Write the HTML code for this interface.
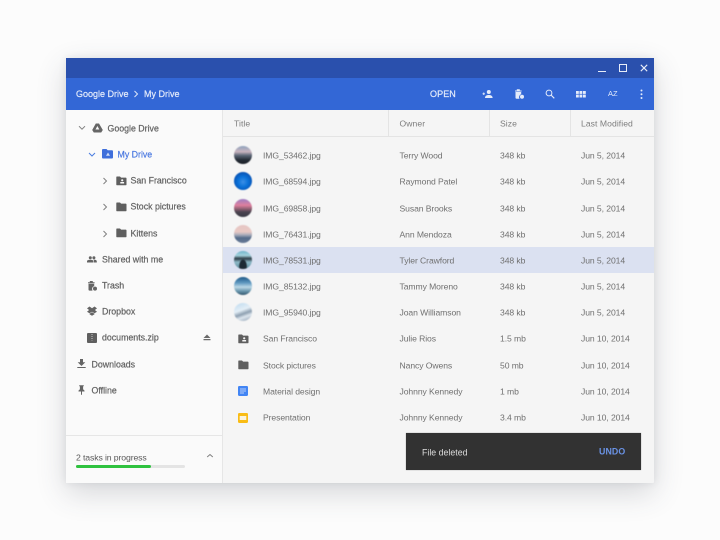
<!DOCTYPE html>
<html><head><meta charset="utf-8"><style>
html,body{margin:0;padding:0;width:720px;height:540px;overflow:hidden;background:#fcfcfc;font-family:"Liberation Sans",sans-serif}
#win{position:absolute;left:66px;top:58px;width:588px;height:425px;background:#f5f5f5;box-shadow:0 10px 30px rgba(60,64,80,.2),0 0 8px rgba(60,64,80,.1);border-radius:1px;overflow:hidden}
.abs,.t,.w,svg{position:absolute}
.t{white-space:nowrap;font-size:8.6px;line-height:12px;color:#707070;transform:translateY(-6.5px);letter-spacing:-.08px;filter:blur(.3px)}
.h{letter-spacing:.06px;color:#7d7d7d}
.s{font-size:8.8px;letter-spacing:0;color:#5f5f5f;-webkit-text-stroke:.2px #5f5f5f}
.w{white-space:nowrap;font-size:9px;line-height:12px;color:#e4ebfa;transform:translateY(-6px);-webkit-text-stroke:.2px #e4ebfa;filter:blur(.25px)}
.av{position:absolute;left:234px;width:18px;height:18px;border-radius:50%;margin-top:-9px;filter:blur(.4px)}
</style></head><body>
<div id="win"></div>
<div class="abs" style="left:66px;top:58px;width:588px;height:20px;background:#2a50ad"></div>
<div class="abs" style="left:66px;top:78px;width:588px;height:32px;background:#3367d6"></div>
<div class="abs" style="left:66px;top:110px;width:156px;height:373px;background:#fafafa"></div>
<div class="abs" style="left:222px;top:110px;width:1px;height:373px;background:#e6e6e6"></div>
<div class="abs" style="left:66px;top:435px;width:156px;height:1px;background:#e6e6e6"></div>
<div class="abs" style="left:223px;top:136px;width:431px;height:1px;background:#e4e4e4"></div>
<div class="abs" style="left:388px;top:110px;width:1px;height:26px;background:#e4e4e4"></div>
<div class="abs" style="left:489px;top:110px;width:1px;height:26px;background:#e4e4e4"></div>
<div class="abs" style="left:570px;top:110px;width:1px;height:26px;background:#e4e4e4"></div>
<div class="abs" style="left:223px;top:247px;width:431px;height:26px;background:#dbe1f1"></div>

<!-- window controls -->
<div class="abs" style="left:598px;top:71px;width:8px;height:1px;background:#e8edf8"></div>
<div class="abs" style="left:619px;top:64px;width:6px;height:6px;border:1.2px solid #e8edf8"></div>
<svg style="left:640px;top:64px" width="8" height="8"><path d="M.8 .8L7.200 7.200M7.200 .8L.8 7.200" stroke="#e8edf8" stroke-width="1.100"/></svg>

<div class="w" style="left:76px;top:94px">Google Drive</div>
<svg style="left:133px;top:90px" width="6" height="8"><path d="M1.500 1L4.500 4L1.500 7" fill="none" stroke="#dfe7f8" stroke-width="1"/></svg>
<div class="w" style="left:144px;top:94px">My Drive</div>
<div class="w" style="left:430px;top:94px;letter-spacing:.1px">OPEN</div>

<!-- toolbar icons -->
<svg style="left:482px;top:89px" width="11" height="10" fill="#e4ebfa"><circle cx="6.800" cy="3" r="2"/><path d="M3 9C3 6.500 5 6 6.800 6S10.600 6.500 10.600 9Z"/><path d="M.500 4.800H3M1.750 3.500V6" stroke="#e4ebfa" stroke-width=".9"/></svg>
<svg style="left:514px;top:88px" width="11" height="12" fill="#e4ebfa"><path d="M1 2.500H7.600V3.500H1ZM2.800 1.200H5.800V2.500H2.800ZM1.500 4H7.200V6.300A3 3 0 0 0 5.500 10.800H2.500Q1.500 10.800 1.500 9.800Z"/><circle cx="8" cy="8.800" r="2"/></svg>
<svg style="left:545px;top:89px" width="10" height="10"><circle cx="4" cy="4" r="2.900" fill="none" stroke="#e4ebfa" stroke-width="1"/><path d="M6 6L9.300 9.300" stroke="#e4ebfa" stroke-width="1.100"/></svg>
<svg style="left:576px;top:91px" width="10" height="7" fill="#e4ebfa"><rect x="0" y="0" width="2.800" height="2.900"/><rect x="3.500" y="0" width="2.800" height="2.900"/><rect x="7" y="0" width="2.800" height="2.900"/><rect x="0" y="3.600" width="2.800" height="2.900"/><rect x="3.500" y="3.600" width="2.800" height="2.900"/><rect x="7" y="3.600" width="2.800" height="2.900"/></svg>
<div class="w" style="left:608px;top:94px;font-size:7.500px;-webkit-text-stroke:0">AZ</div>
<svg style="left:640px;top:89px" width="3" height="11" fill="#e4ebfa"><circle cx="1.500" cy="1.500" r="1"/><circle cx="1.500" cy="5.300" r="1"/><circle cx="1.500" cy="9" r="1"/></svg>

<!-- sidebar -->
<svg style="left:78px;top:125px" width="8" height="6"><path d="M1 1.200L4 4.200L7 1.200" fill="none" stroke="#808080" stroke-width="1"/></svg>
<svg style="left:92px;top:123px" width="11" height="10" fill="#666"><path fill-rule="evenodd" d="M3.800 .500H7L10.800 7L9.200 9.500H1.800L.200 7ZM5.400 3L3.500 6.500H7.300Z"/></svg>
<div class="t s" style="left:107.500px;top:129px">Google Drive</div>

<svg style="left:88px;top:152px" width="8" height="6"><path d="M1 1L4 4L7 1" fill="none" stroke="#4a7de0" stroke-width="1"/></svg>
<svg style="left:102px;top:149px" width="12" height="10"><path d="M1 0H4.500L5.700 1.300H10Q11 1.300 11 2.300V8.500Q11 9.500 10 9.500H1Q0 9.500 0 8.500V1Q0 0 1 0Z" fill="#3f6fdb"/><path d="M6 3.500L8 6.800H4Z" fill="#cfdcf7"/></svg>
<div class="t s" style="left:117.500px;top:155px;color:#4a78e0;-webkit-text-stroke:.2px #4a78e0">My Drive</div>

<svg style="left:102px;top:177px" width="6" height="8"><path d="M1.500 1L4.500 4L1.500 7" fill="none" stroke="#808080" stroke-width="1"/></svg>
<svg style="left:115.500px;top:176px" width="11" height="10"><path d="M1 .500H4L5.100 1.600H9.800Q10.500 1.600 10.500 2.400V8.600Q10.500 9.300 9.800 9.300H1Q.300 9.300 .300 8.600V1.200Q.300 .500 1 .500Z" fill="#5f5f5f"/><circle cx="6.200" cy="4.300" r="1.100" fill="#fafafa"/><rect x="4.300" y="6" width="3.800" height="1.500" fill="#fafafa"/></svg>
<div class="t s" style="left:130.500px;top:181px">San Francisco</div>

<svg style="left:102px;top:203px" width="6" height="8"><path d="M1.500 1L4.500 4L1.500 7" fill="none" stroke="#808080" stroke-width="1"/></svg>
<svg style="left:115.500px;top:202px" width="11" height="10"><path d="M1 .500H4L5.100 1.600H9.800Q10.500 1.600 10.500 2.400V8.600Q10.500 9.300 9.800 9.300H1Q.300 9.300 .300 8.600V1.200Q.300 .500 1 .500Z" fill="#5f5f5f"/></svg>
<div class="t s" style="left:130.500px;top:207px">Stock pictures</div>

<svg style="left:102px;top:230px" width="6" height="8"><path d="M1.500 1L4.500 4L1.500 7" fill="none" stroke="#808080" stroke-width="1"/></svg>
<svg style="left:115.500px;top:228px" width="11" height="10"><path d="M1 .500H4L5.100 1.600H9.800Q10.500 1.600 10.500 2.400V8.600Q10.500 9.300 9.800 9.300H1Q.300 9.300 .300 8.600V1.200Q.300 .500 1 .500Z" fill="#5f5f5f"/></svg>
<div class="t s" style="left:130.500px;top:234px">Kittens</div>

<svg style="left:87px;top:256px" width="10" height="7" fill="#646464"><circle cx="3.300" cy="1.700" r="1.500"/><circle cx="6.900" cy="1.700" r="1.500"/><path d="M0 6.500V5.300C0 4 2 3.700 3.300 3.700S6.500 4 6.500 5.300V6.500ZM7 6.500V5C7 4.500 6.800 4.100 6.300 3.700C8 3.500 9.800 4.100 9.800 5.300V6.500Z"/></svg>
<div class="t s" style="left:102px;top:260px">Shared with me</div>

<svg style="left:87px;top:280px" width="11" height="12" fill="#646464"><path d="M1 2.300H7.600V3.300H1ZM2.800 1H5.800V2.300H2.800ZM1.500 3.800H7.200V6.100A3 3 0 0 0 5.500 10.600H2.500Q1.500 10.600 1.500 9.600Z"/><circle cx="8" cy="8.600" r="2"/></svg>
<div class="t s" style="left:102px;top:286px">Trash</div>

<svg style="left:87px;top:306px" width="10" height="10" fill="#646464"><path d="M2.500 .500L5 2.200L7.500 .500L10 2.400L7.900 4L10 5.700L7.500 7.300L5 5.700L2.500 7.300L0 5.700L2.100 4L0 2.400ZM2.500 7.800L5 6.300L7.500 7.800L7.500 8.300L5 9.800L2.500 8.300Z"/></svg>
<div class="t s" style="left:102px;top:312px">Dropbox</div>

<svg style="left:87px;top:332.500px" width="10" height="10"><rect width="10" height="10" rx="1" fill="#5f5f5f"/><path d="M5 1V7.500" stroke="#c8c8c8" stroke-width="1" stroke-dasharray="1 1"/></svg>
<div class="t s" style="left:102px;top:338px">documents.zip</div>
<svg style="left:203px;top:334px" width="8" height="7" fill="#6a6a6a"><path d="M4 .500L7.500 4H.500ZM.500 5H7.500V6.200H.500Z"/></svg>

<svg style="left:77px;top:359px" width="9" height="10" fill="#646464"><path d="M3 0H6V3.300H8.300L4.500 7L.700 3.300H3ZM.300 8H8.700V9H.300Z"/></svg>
<div class="t s" style="left:91.500px;top:364.500px">Downloads</div>
<svg style="left:78px;top:385px" width="7" height="10" fill="#646464"><path d="M1.200 .300H5.800V1.300H5.100V4.300L6.500 5.600V6.500H4V9.800H3V6.500H.500V5.600L1.900 4.300V1.300H1.200Z"/></svg>
<div class="t s" style="left:91.500px;top:390.500px">Offline</div>

<!-- progress -->
<div class="t" style="left:76px;top:457.500px;color:#5a5a5a;font-size:8.700px;letter-spacing:-.12px">2 tasks in progress</div>
<div class="abs" style="left:76px;top:465px;width:109px;height:3px;border-radius:1.500px;background:#e4e4e4"></div>
<div class="abs" style="left:76px;top:465px;width:75px;height:3px;border-radius:1.500px;background:#2fc23f"></div>
<svg style="left:206px;top:453px" width="8" height="6"><path d="M1.200 4L4 1.500L6.800 4" fill="none" stroke="#808080" stroke-width="1"/></svg>

<!-- header -->
<div class="t h" style="left:234px;top:123.500px">Title</div>
<div class="t h" style="left:399.500px;top:123.500px">Owner</div>
<div class="t h" style="left:500px;top:123.500px">Size</div>
<div class="t h" style="left:581px;top:123.500px">Last Modified</div>

<!-- avatars -->
<div class="av" style="top:155px;background:linear-gradient(180deg,#8fa3bd 0,#c9b4bf 32%,#5d6878 52%,#232a34 78%,#1a1f28 100%)"></div>
<div class="av" style="top:181px;background:radial-gradient(circle at 50% 55%,#3c8fe6 0,#0a72d9 38%,#063a98 100%)"></div>
<div class="av" style="top:208px;background:linear-gradient(180deg,#9d7fc4 0,#df7f9e 35%,#a4687e 50%,#4b4450 72%,#393a44 100%)"></div>
<div class="av" style="top:234px;background:linear-gradient(180deg,#e6c6c4 0,#e9c9c4 38%,#a8acbb 55%,#536a89 72%,#6b7d98 100%)"></div>
<div class="av" style="top:260px;background:radial-gradient(ellipse 4px 7px at 50% 85%,#1d2a33 0,#1d2a33 90%,transparent 100%),linear-gradient(180deg,#6fb3c9 0,#a5d3dd 25%,#2c3b44 42%,#8db9c7 62%,#5d8a9a 100%)"></div>
<div class="av" style="top:286px;background:linear-gradient(180deg,#1f5a88 0,#5d97bf 32%,#bcd8e6 56%,#6a97ae 78%,#33566d 100%)"></div>
<div class="av" style="top:312px;background:linear-gradient(160deg,#bcd9ee 0,#e4eff7 40%,#8d9fb0 58%,#dde6ee 72%,#8a9cae 100%)"></div>

<!-- item icons -->
<svg style="left:237.500px;top:333.500px" width="11" height="10"><path d="M1 .500H4L5.100 1.600H9.800Q10.500 1.600 10.500 2.400V8.600Q10.500 9.300 9.800 9.300H1Q.300 9.300 .300 8.600V1.200Q.300 .500 1 .500Z" fill="#5f5f5f"/><circle cx="6.200" cy="4.300" r="1.100" fill="#f5f5f5"/><rect x="4.300" y="6" width="3.800" height="1.500" fill="#f5f5f5"/></svg>
<svg style="left:237.500px;top:360px" width="11" height="10"><path d="M1 .500H4L5.100 1.600H9.800Q10.500 1.600 10.500 2.400V8.600Q10.500 9.300 9.800 9.300H1Q.300 9.300 .300 8.600V1.200Q.300 .500 1 .500Z" fill="#5f5f5f"/></svg>
<svg style="left:238px;top:385.500px" width="10" height="10"><rect width="10" height="10" rx="1.200" fill="#4285f4"/><path d="M2 3H8M2 5H8M2 7H6" stroke="#dfe9fb" stroke-width=".8"/></svg>
<svg style="left:238px;top:412.500px" width="10" height="10"><rect width="10" height="10" rx="1.200" fill="#f9bc15"/><rect x="1.700" y="3" width="6.600" height="4" fill="#fbf3dc"/></svg>

<!-- rows -->
<div class="t" style="left:263px;top:155.500px">IMG_53462.jpg</div><div class="t" style="left:399.500px;top:155.500px">Terry Wood</div><div class="t" style="left:500px;top:155.500px">348 kb</div><div class="t" style="left:581px;top:155.500px">Jun 5, 2014</div>
<div class="t" style="left:263px;top:181.500px">IMG_68594.jpg</div><div class="t" style="left:399.500px;top:181.500px">Raymond Patel</div><div class="t" style="left:500px;top:181.500px">348 kb</div><div class="t" style="left:581px;top:181.500px">Jun 5, 2014</div>
<div class="t" style="left:263px;top:208.500px">IMG_69858.jpg</div><div class="t" style="left:399.500px;top:208.500px">Susan Brooks</div><div class="t" style="left:500px;top:208.500px">348 kb</div><div class="t" style="left:581px;top:208.500px">Jun 5, 2014</div>
<div class="t" style="left:263px;top:234.500px">IMG_76431.jpg</div><div class="t" style="left:399.500px;top:234.500px">Ann Mendoza</div><div class="t" style="left:500px;top:234.500px">348 kb</div><div class="t" style="left:581px;top:234.500px">Jun 5, 2014</div>
<div class="t" style="left:263px;top:260.500px">IMG_78531.jpg</div><div class="t" style="left:399.500px;top:260.500px">Tyler Crawford</div><div class="t" style="left:500px;top:260.500px">348 kb</div><div class="t" style="left:581px;top:260.500px">Jun 5, 2014</div>
<div class="t" style="left:263px;top:286.500px">IMG_85132.jpg</div><div class="t" style="left:399.500px;top:286.500px">Tammy Moreno</div><div class="t" style="left:500px;top:286.500px">348 kb</div><div class="t" style="left:581px;top:286.500px">Jun 5, 2014</div>
<div class="t" style="left:263px;top:312.500px">IMG_95940.jpg</div><div class="t" style="left:399.500px;top:312.500px">Joan Williamson</div><div class="t" style="left:500px;top:312.500px">348 kb</div><div class="t" style="left:581px;top:312.500px">Jun 5, 2014</div>
<div class="t" style="left:263px;top:339px">San Francisco</div><div class="t" style="left:399.500px;top:339px">Julie Rios</div><div class="t" style="left:500px;top:339px">1.5 mb</div><div class="t" style="left:581px;top:339px">Jun 10, 2014</div>
<div class="t" style="left:263px;top:365.500px">Stock pictures</div><div class="t" style="left:399.500px;top:365.500px">Nancy Owens</div><div class="t" style="left:500px;top:365.500px">50 mb</div><div class="t" style="left:581px;top:365.500px">Jun 10, 2014</div>
<div class="t" style="left:263px;top:391.500px">Material design</div><div class="t" style="left:399.500px;top:391.500px">Johnny Kennedy</div><div class="t" style="left:500px;top:391.500px">1 mb</div><div class="t" style="left:581px;top:391.500px">Jun 10, 2014</div>
<div class="t" style="left:263px;top:418px">Presentation</div><div class="t" style="left:399.500px;top:418px">Johnny Kennedy</div><div class="t" style="left:500px;top:418px">3.4 mb</div><div class="t" style="left:581px;top:418px">Jun 10, 2014</div>

<!-- snackbar -->
<div class="abs" style="left:406px;top:433px;width:235px;height:37px;background:#323232;box-shadow:0 0 1px rgba(0,0,0,.4)"></div>
<div class="t" style="left:422px;top:452.500px;color:#dcdcdc;font-size:8.800px;letter-spacing:0">File deleted</div>
<div class="t" style="left:599px;top:451.500px;color:#6a93e6;font-weight:bold;font-size:8.800px;letter-spacing:.1px">UNDO</div>
</body></html>
